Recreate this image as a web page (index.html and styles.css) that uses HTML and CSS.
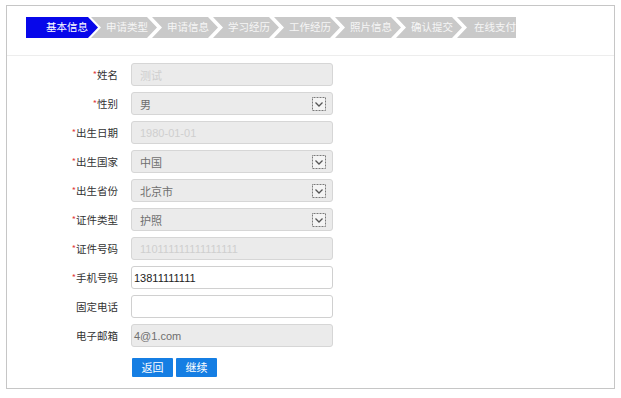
FILE: index.html
```html
<!DOCTYPE html>
<html lang="zh">
<head>
<meta charset="utf-8">
<title>基本信息</title>
<link rel="stylesheet" href="styles.css">
</head>
<body>
<div class="panel">
  <div class="steps">
    <div class="step first active">基本信息</div>
    <div class="step">申请类型</div>
    <div class="step">申请信息</div>
    <div class="step">学习经历</div>
    <div class="step">工作经历</div>
    <div class="step">照片信息</div>
    <div class="step">确认提交</div>
    <div class="step last">在线支付</div>
  </div>
  <div class="form">
    <div class="label"><span class="req">*</span>姓名</div>
    <div class="field disabled"><span class="ph">测试</span></div>

    <div class="label"><span class="req">*</span>性别</div>
    <div class="field select"><span class="val">男</span><svg class="arrow" width="14" height="14" viewBox="0 0 14 14"><rect x="0.5" y="0.5" width="13" height="13" fill="#f4f4f4" stroke="#7a7a7a" stroke-dasharray="1 0.5"/><path d="M3.5 5.5 L7 9 L10.5 5.5" fill="none" stroke="#555" stroke-width="1.3"/></svg></div>

    <div class="label"><span class="req">*</span>出生日期</div>
    <div class="field disabled"><span class="ph">1980-01-01</span></div>

    <div class="label"><span class="req">*</span>出生国家</div>
    <div class="field select"><span class="val">中国</span><svg class="arrow" width="14" height="14" viewBox="0 0 14 14"><rect x="0.5" y="0.5" width="13" height="13" fill="#f4f4f4" stroke="#7a7a7a" stroke-dasharray="1 0.5"/><path d="M3.5 5.5 L7 9 L10.5 5.5" fill="none" stroke="#555" stroke-width="1.3"/></svg></div>

    <div class="label"><span class="req">*</span>出生省份</div>
    <div class="field select"><span class="val">北京市</span><svg class="arrow" width="14" height="14" viewBox="0 0 14 14"><rect x="0.5" y="0.5" width="13" height="13" fill="#f4f4f4" stroke="#7a7a7a" stroke-dasharray="1 0.5"/><path d="M3.5 5.5 L7 9 L10.5 5.5" fill="none" stroke="#555" stroke-width="1.3"/></svg></div>

    <div class="label"><span class="req">*</span>证件类型</div>
    <div class="field select"><span class="val">护照</span><svg class="arrow" width="14" height="14" viewBox="0 0 14 14"><rect x="0.5" y="0.5" width="13" height="13" fill="#f4f4f4" stroke="#7a7a7a" stroke-dasharray="1 0.5"/><path d="M3.5 5.5 L7 9 L10.5 5.5" fill="none" stroke="#555" stroke-width="1.3"/></svg></div>

    <div class="label"><span class="req">*</span>证件号码</div>
    <div class="field disabled"><span class="ph">110111111111111111</span></div>

    <div class="label"><span class="req">*</span>手机号码</div>
    <div class="field tight"><span class="val dark">13811111111</span></div>

    <div class="label">固定电话</div>
    <div class="field"></div>

    <div class="label">电子邮箱</div>
    <div class="field disabled tight"><span class="val">4@1.com</span></div>

    <div class="spacer"></div>
    <div class="buttons">
      <button class="btn">返回</button>
      <button class="btn">继续</button>
    </div>
  </div>
</div>
</body>
</html>
```

FILE: styles.css
```css
* { box-sizing: border-box; }
html, body { margin: 0; padding: 0; background: #fff; }
body {
  font-family: "Liberation Sans", "Noto Sans CJK SC", sans-serif;
  color: #333;
}
.panel {
  margin: 5px 6px 0 6px;
  width: 609px;
  height: 384px;
  border: 1px solid #c6c6c6;
}
.steps {
  display: flex;
  padding: 11px 0 17px 19px;
  border-bottom: 1px solid #ededed;
}
.step {
  height: 21px;
  line-height: 21px;
  width: 66px;
  margin-right: -5px;
  padding-left: 15px;
  background: #c9c9c9;
  color: #f6f6f6;
  font-size: 10.5px;
  white-space: nowrap;
  clip-path: polygon(0 0, 56px 0, 66px 50%, 56px 100%, 0 100%, 10px 50%);
}
.step.first {
  width: 72px;
  margin-right: -7px;
  padding-left: 20px;
  clip-path: polygon(0 0, 62px 0, 72px 50%, 62px 100%, 0 100%);
}
.step.active { background: #0707ea; color: #fff; }
.step.last {
  width: 59px;
  padding-left: 17px;
  clip-path: polygon(0 0, 59px 0, 59px 100%, 0 100%, 10px 50%);
}
.form {
  display: grid;
  grid-template-columns: 111px 202px;
  column-gap: 13px;
  row-gap: 6px;
  padding: 7px 0 11px 0;
  align-items: center;
}
.label {
  text-align: right;
  font-size: 10.5px;
  color: #333;
  font-family: "Noto Sans CJK SC", sans-serif;
}
.req { color: #e2403f; font-size: 9px; vertical-align: 1px; }
.field {
  height: 23px;
  border: 1px solid #d0d0d0;
  border-radius: 3px;
  background: #fff;
  display: flex;
  align-items: center;
  justify-content: space-between;
  padding: 0 6px 0 8px;
  font-size: 11px;
}
.field.disabled, .field.select { background: #ebebeb; border-color: #d6d6d6; }
.field.tight { padding-left: 2px; }
.ph { color: #cfcfcf; }
.val { color: #6f6f6f; }
.val.dark { color: #222; }
.arrow { display: block; }
.spacer { height: 19px; }
.buttons {
  display: flex;
  gap: 3px;
  padding-left: 1px;
  margin-top: 5px;
}
.btn {
  width: 41px;
  height: 19px;
  border: none;
  border-radius: 1px;
  background: #157ee3;
  color: #fff;
  font-family: "Noto Sans CJK SC", sans-serif;
  font-size: 11px;
  padding: 0;
  line-height: 19px;
}
```
